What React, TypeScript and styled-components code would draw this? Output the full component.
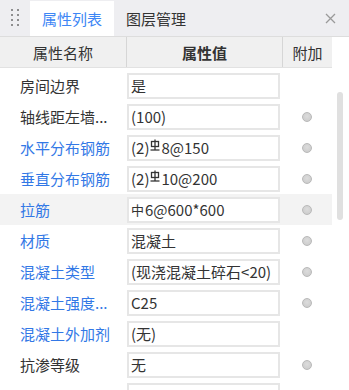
import React from "react";
import styled, { createGlobalStyle } from "styled-components";

const GlobalStyle = createGlobalStyle`
  html, body {
    margin: 0;
    padding: 0;
    background: #ffffff;
  }
  body {
    font-family: "Noto Sans CJK SC", "Noto Sans", sans-serif;
    color: #333333;
  }
`;

const Panel = styled.div`
  width: 349px;
  height: 390px;
  display: flex;
  flex-direction: column;
  overflow: hidden;
  background: #ffffff;
`;

const TabBar = styled.div`
  flex: none;
  height: 37px;
  box-sizing: border-box;
  display: flex;
  align-items: flex-end;
  background: #eeeef1;
  border-bottom: 1px solid #dddddd;
`;

const Grip = styled.div`
  width: 30px;
  height: 35px;
  display: grid;
  grid-template-columns: 2px 2px;
  grid-auto-rows: 2px;
  column-gap: 4px;
  row-gap: 3px;
  align-content: center;
  justify-content: center;
  padding-bottom: 2px;
  box-sizing: border-box;

  span {
    background: #6e6e6e;
    border-radius: 1px;
  }
`;

const Tab = styled.div<{ $active?: boolean }>`
  height: 35px;
  padding: 0 12px;
  display: flex;
  align-items: center;
  font-size: 15px;
  color: ${p => (p.$active ? "#3d86f5" : "#333333")};
  background: ${p => (p.$active ? "#ffffff" : "transparent")};
`;

const CloseButton = styled.div`
  margin-left: auto;
  margin-right: 13px;
  align-self: center;
  display: flex;
`;

const Body = styled.div`
  flex: 1;
  min-height: 0;
  display: flex;
`;

const Main = styled.div`
  width: 332px;
  flex: none;
  display: flex;
  flex-direction: column;
`;

const HeaderRow = styled.div`
  flex: none;
  height: 30px;
  display: grid;
  grid-template-columns: 127px 156px 49px;
  background: #f0f0f0;
  border-bottom: 1px solid #e2e2e2;
  box-sizing: content-box;
`;

const HeaderCell = styled.div<{ $bold?: boolean; $last?: boolean }>`
  display: flex;
  align-items: center;
  justify-content: center;
  font-size: 15px;
  font-weight: ${p => (p.$bold ? 700 : 400)};
  color: #333333;
  box-sizing: border-box;
  border-right: ${p => (p.$last ? "none" : "1px solid #d6d6d6")};
`;

const List = styled.div`
  padding-top: 2px;
`;

const Row = styled.div<{ $selected?: boolean }>`
  height: 31px;
  display: grid;
  grid-template-columns: 127px 155px 50px;
  align-items: center;
  background: ${p => (p.$selected ? "#f3f3f3" : "transparent")};
`;

const Label = styled.div<{ $link?: boolean }>`
  padding-left: 20px;
  font-size: 15px;
  white-space: nowrap;
  overflow: hidden;
  color: ${p => (p.$link ? "#3278e6" : "#333333")};
`;

const ValueBox = styled.div`
  width: 153px;
  height: 26px;
  box-sizing: border-box;
  border: 2px solid #e6e6e6;
  background: #ffffff;
  padding-left: 2px;
  display: flex;
  align-items: center;
  font-size: 15px;
  color: #333333;
  white-space: nowrap;
  overflow: hidden;
`;

const AddCell = styled.div`
  display: flex;
  justify-content: center;
  align-items: center;
`;

const Dot = styled.div`
  width: 10px;
  height: 10px;
  box-sizing: border-box;
  border-radius: 50%;
  background: radial-gradient(circle at 50% 40%, #dcdcdc, #c9c9c9);
  border: 1px solid #b9b9b9;
`;

const SmallBar = styled.span`
  font-size: 13px;
  margin-right: 1px;
`;

const Gutter = styled.div`
  width: 17px;
  flex: none;
`;

const Thumb = styled.div`
  margin-top: 55px;
  margin-left: 5px;
  width: 6px;
  height: 128px;
  border-radius: 3px;
  background: #e0e0e0;
`;

const GradeThree: React.FC = () => (
  <svg width="10" height="13" viewBox="0 0 10 13" style={{ margin: "0 1px 4px 1px" }}>
    <rect x="1.5" y="2.5" width="7" height="5" fill="none" stroke="#333" strokeWidth="1.3" />
    <line x1="5" y1="0.5" x2="5" y2="11" stroke="#333" strokeWidth="1.3" />
    <line x1="0.5" y1="11" x2="9.5" y2="11" stroke="#333" strokeWidth="1.3" />
  </svg>
);

interface PropRow {
  label: string;
  link?: boolean;
  value: React.ReactNode;
  dot?: boolean;
  selected?: boolean;
}

const rows: Array<PropRow> = [
  { label: "房间边界", value: "是" },
  { label: "轴线距左墙...", value: "(100)", dot: true },
  {
    label: "水平分布钢筋",
    link: true,
    value: (
      <>
        (2)
        <GradeThree />
        8@150
      </>
    ),
    dot: true
  },
  {
    label: "垂直分布钢筋",
    link: true,
    value: (
      <>
        (2)
        <GradeThree />
        10@200
      </>
    ),
    dot: true
  },
  {
    label: "拉筋",
    link: true,
    value: (
      <>
        <SmallBar>中</SmallBar>6@600*600
      </>
    ),
    dot: true,
    selected: true
  },
  { label: "材质", link: true, value: "混凝土", dot: true },
  { label: "混凝土类型", link: true, value: "(现浇混凝土碎石<20)", dot: true },
  { label: "混凝土强度...", link: true, value: "C25", dot: true },
  { label: "混凝土外加剂", link: true, value: "(无)" },
  { label: "抗渗等级", value: "无", dot: true },
  { label: "", value: "", dot: true }
];

const App: React.FC = () => {
  return (
    <>
      <GlobalStyle />
      <Panel>
        <TabBar>
          <Grip>
            {Array.from({ length: 8 }).map((_, i) => (
              <span key={i} />
            ))}
          </Grip>
          <Tab $active>属性列表</Tab>
          <Tab>图层管理</Tab>
          <CloseButton>
            <svg width="11" height="11" viewBox="0 0 11 11">
              <path d="M1 1L10 10M10 1L1 10" stroke="#9a9a9a" strokeWidth="1.3" />
            </svg>
          </CloseButton>
        </TabBar>
        <Body>
          <Main>
            <HeaderRow>
              <HeaderCell>属性名称</HeaderCell>
              <HeaderCell $bold>属性值</HeaderCell>
              <HeaderCell $last>附加</HeaderCell>
            </HeaderRow>
            <List>
              {rows.map((row, i) => (
                <Row key={i} $selected={row.selected}>
                  <Label $link={row.link}>{row.label}</Label>
                  <ValueBox>{row.value}</ValueBox>
                  <AddCell>{row.dot && <Dot />}</AddCell>
                </Row>
              ))}
            </List>
          </Main>
          <Gutter>
            <Thumb />
          </Gutter>
        </Body>
      </Panel>
    </>
  );
};

export default App;
